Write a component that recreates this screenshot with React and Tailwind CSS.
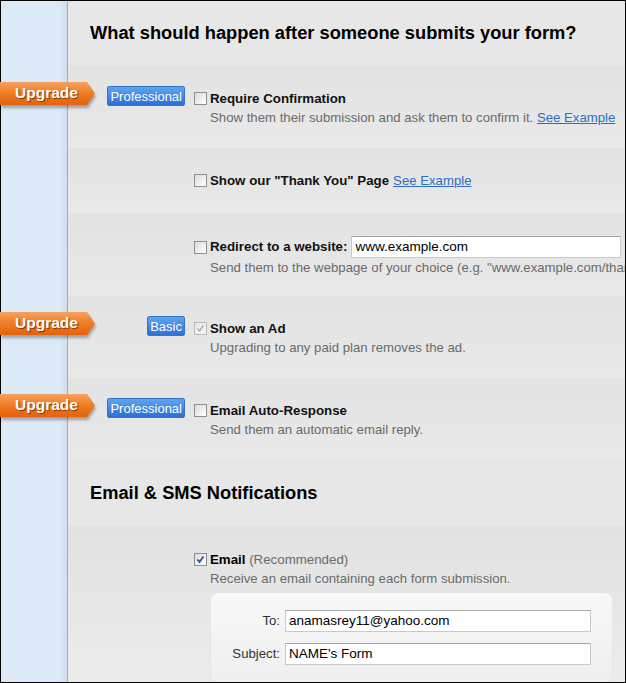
import React from "react";

function Ribbon() {
  return (
    <div className="absolute left-[-68px] top-[16px] w-[100px] h-[28px]">
      <svg
        width="100"
        height="28"
        viewBox="0 0 100 28"
        className="absolute left-0 top-0 drop-shadow-[1px_3px_1.5px_rgba(0,0,0,0.3)]"
      >
        <defs>
          <linearGradient id="ribbonGrad" x1="0" y1="0" x2="0" y2="1">
            <stop offset="0" stopColor="#f5a263" />
            <stop offset="0.45" stopColor="#f07f27" />
            <stop offset="1" stopColor="#e3620b" />
          </linearGradient>
        </defs>
        <polygon points="0,0 87,0 95,11.5 87,23 0,23" fill="url(#ribbonGrad)" />
      </svg>
      <span className="absolute left-[15px] top-0 h-[22px] leading-[22px] text-[15.5px] font-bold text-white [text-shadow:1px_1px_1px_#7c3606]">
        Upgrade
      </span>
    </div>
  );
}

function Badge({ children }) {
  return (
    <span className="mt-[-3px] inline-flex h-[20px] items-center rounded-[2px] border border-[#3775c6] bg-gradient-to-b from-[#5ea5ee] to-[#2b6fd5] px-[2px] text-[13px] leading-none text-white">
      {children}
    </span>
  );
}

function Checkbox({ checked, disabled }) {
  return (
    <span
      className={
        "relative inline-block h-[13px] w-[13px] shrink-0 border " +
        (disabled
          ? "border-[#b8b8b8] bg-gradient-to-br from-[#e6e6e6] to-[#f8f8f8]"
          : "border-[#8e8f8f] bg-gradient-to-br from-[#dcdcdc] to-[#ffffff]")
      }
    >
      {checked && (
        <svg
          viewBox="0 0 11 11"
          width="11"
          height="11"
          className="absolute left-0 top-0"
        >
          <path
            d="M2.5 5.5 L4.5 8 L8.5 2.5"
            fill="none"
            stroke={disabled ? "#a9a9a9" : "#2a4fa6"}
            strokeWidth={disabled ? "1.3" : "1.8"}
          />
        </svg>
      )}
    </span>
  );
}

function Row({ h, pt = "pt-[23px]", ribbon, badge, children }) {
  return (
    <div
      className={
        "relative flex items-start bg-gradient-to-b from-[#e3e3e3] to-[#e9e9e9] " +
        h +
        " " +
        pt
      }
    >
      {ribbon && <Ribbon />}
      <div className="flex w-[117px] shrink-0 justify-end">{badge}</div>
      <div className="ml-[9px] min-w-0 flex-1 overflow-hidden">{children}</div>
    </div>
  );
}

function LabelLine({ checked, disabled, children }) {
  return (
    <div className="flex h-[19px] items-center">
      <Checkbox checked={checked} disabled={disabled} />
      <span className="ml-[3px] whitespace-nowrap text-[13.3px] font-bold text-[#111]">
        {children}
      </span>
    </div>
  );
}

function Desc({ children }) {
  return (
    <div className="ml-[16px] whitespace-nowrap text-[13.2px] leading-[19px] text-[#6a6a6a]">
      {children}
    </div>
  );
}

function Link({ children }) {
  return (
    <a className="text-[#2c6ec4] underline" href="#">
      {children}
    </a>
  );
}

export default function App() {
  return (
    <div className="flex h-[683px] w-[626px] border border-black font-['Liberation_Sans',Arial,sans-serif]">
      <div className="w-[67px] shrink-0 border-r border-[#a3acb6] bg-gradient-to-r from-[#dceaf7] from-[88%] to-[#cfdeed]" />
      <div className="flex min-w-0 flex-1 flex-col">
        <div className="h-[65px] shrink-0 bg-[#e7e7e7] pl-[22px] pt-[21px] text-[18.3px] font-bold leading-[22px] text-black">
          What should happen after someone submits your form?
        </div>

        <Row h="h-[82px]" ribbon badge={<Badge>Professional</Badge>}>
          <LabelLine>Require Confirmation</LabelLine>
          <Desc>
            Show them their submission and ask them to confirm it.{" "}
            <Link>See Example</Link>
          </Desc>
        </Row>

        <Row h="h-[65px]">
          <div className="flex h-[19px] items-center">
            <Checkbox />
            <span className="ml-[3px] whitespace-nowrap text-[13.3px] font-bold text-[#111]">
              Show our "Thank You" Page
            </span>
            <span className="ml-[4px] whitespace-nowrap text-[13.2px]">
              <Link>See Example</Link>
            </span>
          </div>
        </Row>

        <Row h="h-[83px]">
          <div className="flex h-[22px] items-center">
            <Checkbox />
            <span className="ml-[3px] whitespace-nowrap text-[13.3px] font-bold text-[#111]">
              Redirect to a website:
            </span>
            <div className="ml-[4px] mr-[4px] flex h-[22px] min-w-0 flex-1 items-center border border-[#c9c9c9] border-t-[#a6a6a6] bg-white px-[3px] text-[13.5px] text-black">
              www.example.com
            </div>
          </div>
          <Desc>
            Send them to the webpage of your choice (e.g. "www.example.com/thankyou")
          </Desc>
        </Row>

        <Row h="h-[82px]" ribbon badge={<Badge>Basic</Badge>}>
          <LabelLine checked disabled>
            Show an Ad
          </LabelLine>
          <Desc>Upgrading to any paid plan removes the ad.</Desc>
        </Row>

        <Row h="h-[81px]" ribbon badge={<Badge>Professional</Badge>}>
          <LabelLine>Email Auto-Response</LabelLine>
          <Desc>Send them an automatic email reply.</Desc>
        </Row>

        <div className="h-[67px] shrink-0 bg-[#e7e7e7] pl-[22px] pt-[23px] text-[18.3px] font-bold leading-[22px] text-black">
          Email &amp; SMS Notifications
        </div>

        <div className="flex min-h-0 flex-1 items-start overflow-hidden bg-gradient-to-b from-[#e2e2e2] to-[#ececec] pt-[24px]">
          <div className="w-[117px] shrink-0" />
          <div className="ml-[9px] min-w-0 flex-1">
            <div className="flex h-[19px] items-center">
              <Checkbox checked />
              <span className="ml-[3px] whitespace-nowrap text-[13.3px]">
                <span className="font-bold text-black">Email</span>{" "}
                <span className="text-[#6a6a6a]">(Recommended)</span>
              </span>
            </div>
            <Desc>Receive an email containing each form submission.</Desc>
            <div className="ml-[16px] mt-[4px] w-[403px] rounded-[8px] border border-[#e6e6e6] bg-gradient-to-b from-[#f8f8f8] to-[#efefef] pb-[17px] pt-[17px]">
              <div className="grid grid-cols-[69px_306px] items-center gap-x-[5px] gap-y-[11px]">
                <span className="text-right text-[13.2px] text-[#333]">To:</span>
                <div className="flex h-[22px] items-center border border-[#c9c9c9] border-t-[#a6a6a6] bg-white px-[3px] text-[13.5px] text-black">
                  anamasrey11@yahoo.com
                </div>
                <span className="text-right text-[13.2px] text-[#333]">Subject:</span>
                <div className="flex h-[22px] items-center border border-[#c9c9c9] border-t-[#a6a6a6] bg-white px-[3px] text-[13.5px] text-black">
                  NAME's Form
                </div>
              </div>
            </div>
          </div>
        </div>
      </div>
    </div>
  );
}
